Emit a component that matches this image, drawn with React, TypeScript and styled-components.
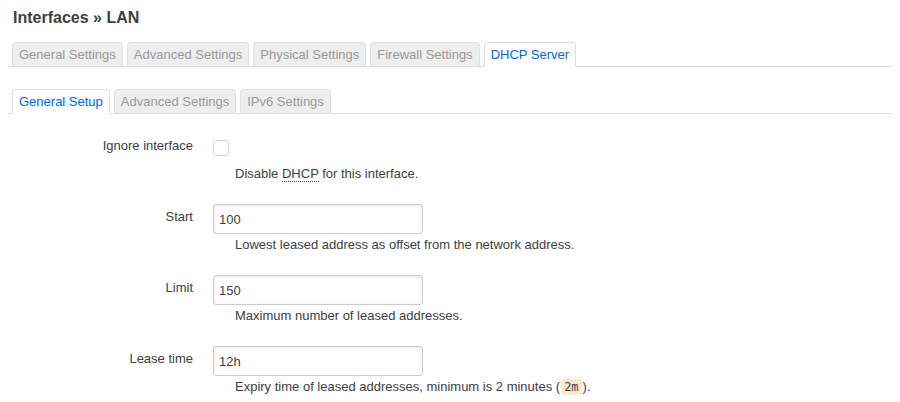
import React from 'react';
import styled, { createGlobalStyle } from 'styled-components';

const GlobalStyle = createGlobalStyle`
  html, body {
    margin: 0;
    padding: 0;
    background: #fff;
  }
  body {
    font-family: "Liberation Sans", Arial, Helvetica, sans-serif;
    font-size: 13px;
    color: #404040;
  }
`;

const Page = styled('div')`
  padding: 0 8px;
`;

const Title = styled('h2')`
  margin: 0;
  padding: 8px 5px;
  font-size: 16px;
  line-height: 20px;
  font-weight: bold;
  color: #404040;
`;

const TabList = styled('ul')<{ $top: number }>`
  display: flex;
  gap: 4px;
  list-style: none;
  margin: ${(p) => p.$top}px 0 0;
  padding: 0 0 0 4px;
  border-bottom: 1px solid #ddd;
  height: 24px;
`;

const Tab = styled('li')<{ $active?: boolean }>`
  box-sizing: border-box;
  height: ${(p) => (p.$active ? 25 : 24)}px;
  padding: 2px 6px 0;
  line-height: 19px;
  border: 1px solid ${(p) => (p.$active ? '#ddd' : '#e0e0e0')};
  border-bottom: ${(p) => (p.$active ? '1px solid #fff' : 'none')};
  border-radius: 4px 4px 0 0;
  background: ${(p) => (p.$active ? '#fff' : '#eee')};
  color: ${(p) => (p.$active ? '#0069d6' : '#999')};
  white-space: nowrap;
  cursor: pointer;
`;

const Form = styled('div')`
  display: flex;
  flex-direction: column;
  gap: 21px;
  padding-top: 19px;
`;

const Row = styled('div')`
  display: flex;
  gap: 20px;
`;

const Label = styled('label')`
  width: 185px;
  flex-shrink: 0;
  text-align: right;
  padding-top: 4px;
  line-height: 18px;
`;

const Field = styled('div')`
  display: flex;
  flex-direction: column;
`;

const Control = styled('div')`
  height: 30px;
  display: flex;
  align-items: center;
`;

const Checkbox = styled('span')`
  box-sizing: border-box;
  width: 16px;
  height: 16px;
  margin-top: -1px;
  border: 1px solid #d4d4d4;
  border-radius: 3px;
  background: #fff;
`;

const TextInput = styled('input')`
  box-sizing: border-box;
  width: 210px;
  height: 30px;
  padding: 0 5px;
  border: 1px solid #ccc;
  border-radius: 3px;
  box-shadow: inset 0 1px 3px rgba(0, 0, 0, 0.1);
  font-family: inherit;
  font-size: 13px;
  color: #404040;
  outline: none;
`;

const Description = styled('div')`
  margin: 2px 0 0 22px;
  line-height: 18px;
  white-space: nowrap;
`;

const Abbr = styled('abbr')`
  text-decoration: none;
  border-bottom: 1px dotted #404040;
`;

const Code = styled('code')`
  font-family: "DejaVu Sans Mono", "Liberation Mono", monospace;
  font-size: 12px;
  background: #fde8cf;
  color: #404040;
  border-radius: 3px;
  padding: 1px 3px;
  margin: 0 1px;
`;

const topTabs = ['General Settings', 'Advanced Settings', 'Physical Settings', 'Firewall Settings', 'DHCP Server'];
const subTabs = ['General Setup', 'Advanced Settings', 'IPv6 Settings'];

function InputRow({ label, value, children }: { label: string; value: string; children: React.ReactNode }) {
  return (
    <Row>
      <Label>{label}</Label>
      <Field>
        <Control>
          <TextInput defaultValue={value} />
        </Control>
        <Description>{children}</Description>
      </Field>
    </Row>
  );
}

export default function App() {
  return (
    <Page>
      <GlobalStyle />
      <Title>Interfaces » LAN</Title>
      <TabList $top={6}>
        {topTabs.map((t) => (
          <Tab key={t} $active={t === 'DHCP Server'}>
            {t}
          </Tab>
        ))}
      </TabList>
      <TabList $top={22}>
        {subTabs.map((t) => (
          <Tab key={t} $active={t === 'General Setup'}>
            {t}
          </Tab>
        ))}
      </TabList>
      <Form>
        <Row>
          <Label>Ignore interface</Label>
          <Field>
            <Control>
              <Checkbox />
            </Control>
            <Description>
              Disable <Abbr title="Dynamic Host Configuration Protocol">DHCP</Abbr> for this interface.
            </Description>
          </Field>
        </Row>
        <InputRow label="Start" value="100">
          Lowest leased address as offset from the network address.
        </InputRow>
        <InputRow label="Limit" value="150">
          Maximum number of leased addresses.
        </InputRow>
        <InputRow label="Lease time" value="12h">
          Expiry time of leased addresses, minimum is 2 minutes (<Code>2m</Code>).
        </InputRow>
      </Form>
    </Page>
  );
}
